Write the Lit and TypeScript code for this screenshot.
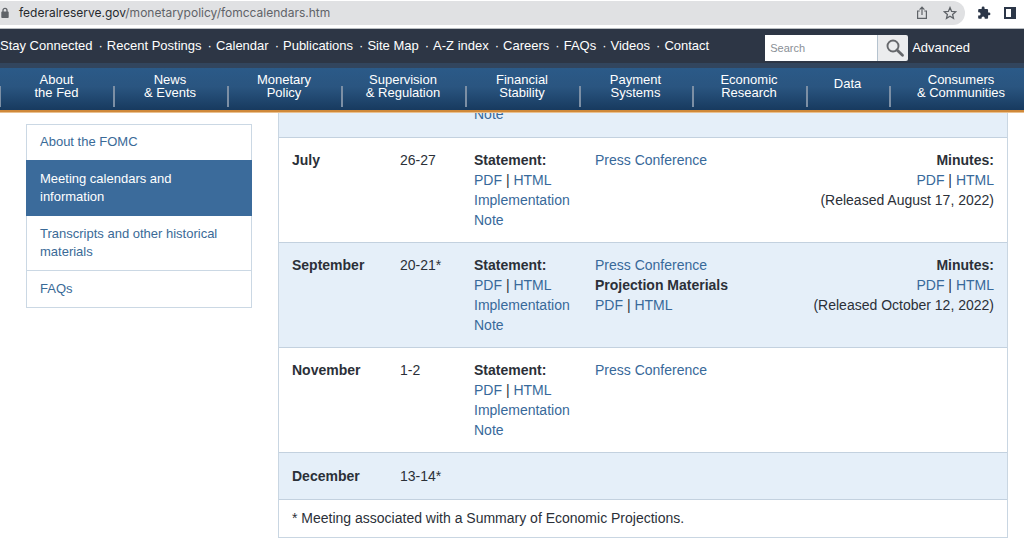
import { LitElement, html, css, nothing, TemplateResult } from "lit";
import { customElement } from "lit/decorators.js";

const LINK = css`
  a {
    color: inherit;
    text-decoration: none;
  }
`;

@customElement("browser-bar")
class BrowserBar extends LitElement {
  static styles = css`
    :host {
      display: flex;
      align-items: center;
      height: 24px;
      padding: 1px 7px 3px 0;
      border-bottom: 1px solid #b9bdc1;
      background: #fff;
      color: #5f6368;
    }
    .address {
      flex: 1;
      display: flex;
      align-items: center;
      height: 24px;
      padding: 0 8px 0 1px;
      border-radius: 0 12px 12px 0;
      background: #e0e1e3;
    }
    .url {
      flex: 1;
      min-width: 0;
      margin-left: 10px;
      font: 12px/20px Inter, sans-serif;
      color: #5f6368;
      white-space: nowrap;
    }
    .host {
      color: #25282c;
    }
    button {
      display: flex;
      padding: 0;
      border: 0;
      background: none;
      color: inherit;
    }
    .inside {
      margin-left: 14px;
    }
    .dark {
      margin-left: 12px;
      color: #2b3648;
    }
    svg {
      display: block;
    }
  `;
  render() {
    return html`
      <div class="address">
        <svg width="8" height="12" viewBox="0 0 8 12" aria-hidden="true">
          <path d="M2 5V3.400a2 2 0 0 1 4 0V5" fill="none" stroke="#5f6368" stroke-width="1.3" />
          <rect x="0.3" y="4.600" width="7.400" height="6.400" rx="0.8" fill="#5f6368" />
        </svg>
        <div class="url"><span class="host">federalreserve.gov</span>/monetarypolicy/fomccalendars.htm</div>
        <button class="inside" aria-label="Share">
          <svg width="14" height="14" viewBox="0 0 14 14" fill="none" stroke="currentColor" stroke-width="1.2">
            <path d="M4.800 5H2.600v7.400h8.800V5H9.200M7 9V1.400M4.600 3.600 7 1.200l2.400 2.400" />
          </svg>
        </button>
        <button class="inside" aria-label="Bookmark">
          <svg width="14" height="14" viewBox="0 0 14 14" fill="none" stroke="currentColor" stroke-width="1.3">
            <path d="M7 1.600l1.600 3.800 4.100.3-3.100 2.700.9 4L7 10.300l-3.500 2.100.9-4L1.300 5.700l4.100-.3z" />
          </svg>
        </button>
      </div>
      <button class="dark" aria-label="Extensions">
        <svg width="14" height="14" viewBox="0 0 24 24" fill="currentColor">
          <path d="M20.500 11H19V7c0-1.100-.9-2-2-2h-4V3.500a2.500 2.500 0 0 0-5 0V5H4c-1.100 0-2 .9-2 2v3.800h1.500a2.700 2.700 0 0 1 0 5.400H2V20c0 1.100.9 2 2 2h3.800v-1.500a2.700 2.700 0 0 1 5.400 0V22H17c1.100 0 2-.9 2-2v-4h1.500a2.500 2.500 0 0 0 0-5z" />
        </svg>
      </button>
      <button class="dark" aria-label="Side panel">
        <svg width="14" height="14" viewBox="0 0 14 14" fill="currentColor" fill-rule="evenodd">
          <path d="M1 1h12v12H1zM3 3v8h5V3z" />
        </svg>
      </button>
    `;
  }
}

const UTILITY = [
  "Stay Connected", "Recent Postings", "Calendar", "Publications", "Site Map",
  "A-Z index", "Careers", "FAQs", "Videos", "Contact",
];

const SECTIONS: string[][] = [
  ["About", "the Fed"],
  ["News", "& Events"],
  ["Monetary", "Policy"],
  ["Supervision", "& Regulation"],
  ["Financial", "Stability"],
  ["Payment", "Systems"],
  ["Economic", "Research"],
  ["Data"],
  ["Consumers", "& Communities"],
];

@customElement("site-header")
class SiteHeader extends LitElement {
  static styles = [
    LINK,
    css`
      :host {
        display: block;
        color: #fff;
        font: 13px/16px "Liberation Sans", Arial, sans-serif;
        border-bottom: 1px solid #e9c08f;
      }
      ul {
        list-style: none;
        margin: 0;
        padding: 0;
      }
      .utility {
        display: flex;
        justify-content: space-between;
        align-items: flex-start;
        padding: 6px 54px 2px 0;
        background: #2d3645;
      }
      .links {
        display: flex;
        white-space: nowrap;
        padding-top: 3px;
      }
      .links li + li::before {
        content: "·";
        margin: 0 4px 0 6px;
      }
      .search {
        display: flex;
        align-items: center;
      }
      .search input {
        box-sizing: border-box;
        width: 112px;
        height: 26px;
        padding: 0 5px;
        border: 0;
        border-radius: 0;
        background: #fff;
        color: #333;
        font: 11px "Liberation Sans", Arial, sans-serif;
      }
      .search input::placeholder {
        color: #8a8f96;
        opacity: 1;
      }
      .search button {
        display: flex;
        align-items: center;
        justify-content: center;
        box-sizing: border-box;
        width: 31px;
        height: 26px;
        margin-right: 4px;
        padding: 0 0 0 4px;
        border: 0;
        border-left: 1px solid #b5c3cf;
        border-radius: 0 2px 2px 0;
        background: #ebecee;
      }
      .sections {
        display: grid;
        grid-template-columns: 113fr 114fr 114fr 124fr 114fr 113fr 114fr 83fr 135fr;
        height: 42px;
        border-top: 5px solid #32455d;
        border-bottom: 2px solid #d0893a;
        background: linear-gradient(#2b5a88, #2a5580 45%, #173a5f);
        text-align: center;
        line-height: 13px;
      }
      .sections li {
        display: flex;
        justify-content: center;
        padding-top: 5px;
        background: linear-gradient(#7c8fa5, #7c8fa5) left 18px / 2px 21px no-repeat;
      }
      .sections li:first-child {
        background-size: 1px 21px;
      }
      .sections li:last-child {
        padding-left: 9px;
      }
      .sections .single {
        padding-top: 9px;
      }
      .sections span {
        display: block;
      }
    `,
  ];
  render() {
    return html`
      <div class="utility">
        <ul class="links">
          ${UTILITY.map((label) => html`<li><a href="#">${label}</a></li>`)}
        </ul>
        <form class="search" @submit=${(e: Event) => e.preventDefault()}>
          <input type="text" placeholder="Search" aria-label="Search" />
          <button type="submit" aria-label="Submit search">
            <svg width="20" height="20" viewBox="0 0 20 20" fill="none" stroke="#66686c">
              <circle cx="8" cy="8" r="5.500" stroke-width="1.900" />
              <path d="M12 12l5.500 5.200" stroke-width="2.800" stroke-linecap="round" />
            </svg>
          </button>
          <a href="#">Advanced</a>
        </form>
      </div>
      <ul class="sections">
        ${SECTIONS.map(
          (lines) => html`<li class=${lines.length === 1 ? "single" : "double"}>
            <a href="#">${lines.map((line) => html`<span>${line}</span>`)}</a>
          </li>`
        )}
      </ul>
    `;
  }
}

@customElement("side-menu")
class SideMenu extends LitElement {
  static styles = [
    LINK,
    css`
      ul {
        list-style: none;
        margin: 0;
        padding: 0;
        border: 1px solid #cbd8e4;
        border-bottom: 0;
        font: 13px/18px "Liberation Sans", Arial, sans-serif;
        color: #3a6a97;
      }
      li {
        border-bottom: 1px solid #cbd8e4;
      }
      a {
        display: block;
        padding: 9px 13px;
      }
      li:first-child a {
        padding-top: 8px;
      }
      .active {
        margin: -1px -1px 0;
        border: 1px solid #3b6b9b;
        background: #3b6b9b;
        color: #fff;
      }
    `,
  ];
  render() {
    return html`<ul>
      <li><a href="#">About the FOMC</a></li>
      <li class="active"><a href="#" aria-current="page">Meeting calendars and information</a></li>
      <li><a href="#">Transcripts and other historical materials</a></li>
      <li><a href="#">FAQs</a></li>
    </ul>`;
  }
}

interface Meeting {
  month: string;
  days: string;
  statement?: boolean;
  press?: boolean;
  projections?: boolean;
  released?: string;
}

const MEETINGS: Meeting[] = [
  { month: "July", days: "26-27", statement: true, press: true, released: "August 17, 2022" },
  { month: "September", days: "20-21*", statement: true, press: true, projections: true, released: "October 12, 2022" },
  { month: "November", days: "1-2", statement: true, press: true },
  { month: "December", days: "13-14*" },
];

@customElement("meeting-table")
class MeetingTable extends LitElement {
  static styles = [
    LINK,
    css`
      :host {
        display: block;
        font: 14px/20px "Liberation Sans", Arial, sans-serif;
        color: #2b3038;
      }
      table {
        width: 100%;
        table-layout: fixed;
        border-collapse: separate;
        border-spacing: 0;
        border: 1px solid #c9d6e2;
        border-top: 0;
      }
      .month {
        width: 121px;
      }
      .days {
        width: 74px;
      }
      .statement {
        width: 121px;
      }
      .press {
        width: 190px;
      }
      th,
      td {
        padding: 12px 0;
        text-align: left;
        vertical-align: top;
        border-bottom: 1px solid #c3d1df;
      }
      th:first-child,
      td:first-child {
        padding-left: 13px;
      }
      tbody tr:nth-child(odd) {
        background: #e5eff9;
      }
      tbody .continued td {
        padding: 0 0 13px;
      }
      .brief th,
      .brief td {
        padding-top: 13px;
        padding-bottom: 13px;
      }
      tbody td:last-child {
        padding-right: 13px;
        text-align: right;
      }
      tfoot td {
        padding: 8px 13px 9px;
        border-bottom: 0;
      }
      a {
        color: #38699a;
      }
    `,
  ];

  private files(): TemplateResult {
    return html`<a href="#">PDF</a> | <a href="#">HTML</a>`;
  }

  private row(m: Meeting): TemplateResult {
    return html`<tr class=${m.statement ? "full" : "brief"}>
      <th scope="row">${m.month}</th>
      <td>${m.days}</td>
      <td>
        ${m.statement
          ? html`<strong>Statement:</strong><br />${this.files()}<br /><a href="#">Implementation<br />Note</a>`
          : nothing}
      </td>
      <td>
        ${m.press ? html`<a href="#">Press Conference</a>` : nothing}
        ${m.projections ? html`<br /><strong>Projection Materials</strong><br />${this.files()}` : nothing}
      </td>
      <td>
        ${m.released
          ? html`<strong>Minutes:</strong><br />${this.files()}<br />(Released ${m.released})`
          : nothing}
      </td>
    </tr>`;
  }

  render() {
    return html`<table>
      <colgroup>
        <col class="month" />
        <col class="days" />
        <col class="statement" />
        <col class="press" />
        <col />
      </colgroup>
      <tbody>
        <tr class="continued">
          <td></td>
          <td></td>
          <td><a href="#">Note</a></td>
          <td></td>
          <td></td>
        </tr>
        ${MEETINGS.map((m) => this.row(m))}
      </tbody>
      <tfoot>
        <tr>
          <td colspan="5">* Meeting associated with a Summary of Economic Projections.</td>
        </tr>
      </tfoot>
    </table>`;
  }
}

@customElement("app-root")
class AppRoot extends LitElement {
  static styles = css`
    :host {
      display: block;
      background: #fff;
    }
    main {
      display: grid;
      grid-template-columns: 226px minmax(0, 1fr);
      gap: 26px;
      align-items: start;
      padding: 0 16px 0 26px;
      overflow: hidden;
    }
    side-menu {
      display: block;
      margin-top: 11px;
    }
    /* The table is scrolled partly under the header. */
    meeting-table {
      margin-top: -9px;
    }
  `;
  render() {
    return html`
      <browser-bar></browser-bar>
      <site-header></site-header>
      <main>
        <side-menu></side-menu>
        <meeting-table></meeting-table>
      </main>
    `;
  }
}
